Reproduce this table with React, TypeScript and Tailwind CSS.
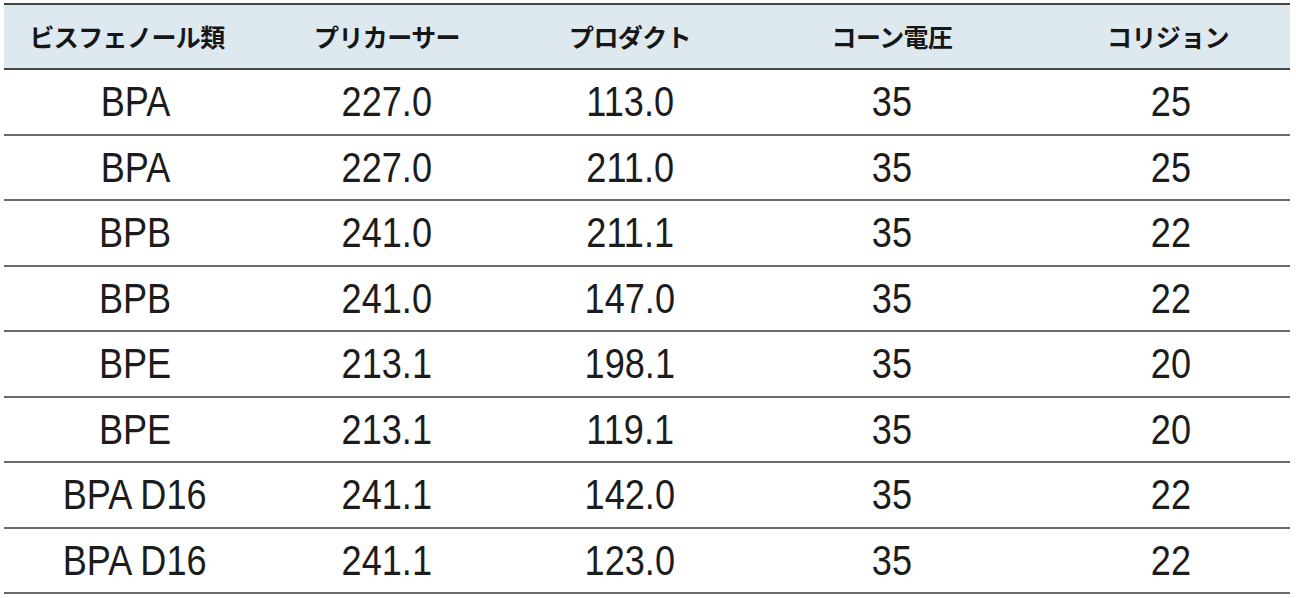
const headers = ["ビスフェノール類", "プリカーサー", "プロダクト", "コーン電圧", "コリジョン"];

const rows: string[][] = [
  ["BPA", "227.0", "113.0", "35", "25"],
  ["BPA", "227.0", "211.0", "35", "25"],
  ["BPB", "241.0", "211.1", "35", "22"],
  ["BPB", "241.0", "147.0", "35", "22"],
  ["BPE", "213.1", "198.1", "35", "20"],
  ["BPE", "213.1", "119.1", "35", "20"],
  ["BPA D16", "241.1", "142.0", "35", "22"],
  ["BPA D16", "241.1", "123.0", "35", "22"],
];

const cols = "grid grid-cols-[262px_242px_244px_280px_258px]";

// header cells sit a little off the data centres in the source table
const headPad = ["pr-[16px]", "", "", "", "pl-[14px]"];
const cellPad = ["", "", "", "", "pl-[20px]"];

export default function App() {
  return (
    <div className="min-h-screen bg-white pl-[4px] pt-[3px]">
      <div className="w-[1286px]">
        <div
          className={`${cols} h-[67px] items-center border-t-2 border-b-2 border-[#454545] bg-[#dde8ef] text-[#161616]`}
        >
          {headers.map((h, i) => (
            <div
              key={h}
              className={`text-center text-[25px] font-bold tracking-[-0.6px] [font-family:'Noto_Sans_CJK_JP','Noto_Sans',sans-serif] ${headPad[i]}`}
            >
              {h}
            </div>
          ))}
        </div>
        {rows.map((r, ri) => (
          <div
            key={ri}
            className={`${cols} h-[65.5px] items-center border-b-2 border-[#6a6a6a] text-[#1c1c1c]`}
          >
            {r.map((c, ci) => (
              <div key={ci} className={`text-center ${cellPad[ci]}`}>
                <span className="inline-block scale-x-[0.84] text-[43px] leading-none [font-family:'Liberation_Sans',sans-serif]">
                  {c}
                </span>
              </div>
            ))}
          </div>
        ))}
      </div>
    </div>
  );
}
